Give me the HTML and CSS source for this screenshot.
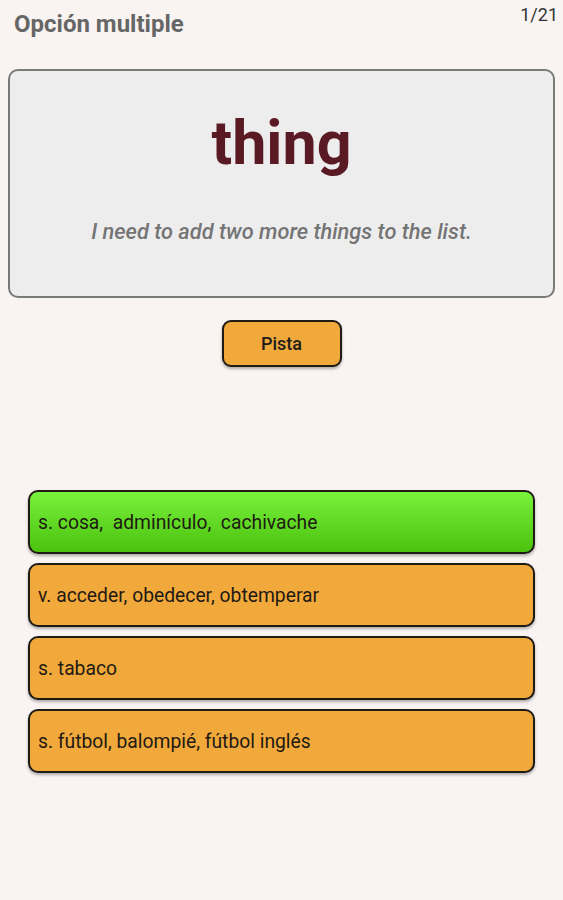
FILE: index.html
```html
<!DOCTYPE html>
<html lang="es">
<head>
  <meta charset="UTF-8">
  <title>Opción multiple</title>
  <link rel="stylesheet" href="styles.css">
</head>
<body>

<div class="screen">
  <div class="topbar">
    <div class="title">Opción multiple</div>
    <div class="counter">1/21</div>
  </div>

  <div class="card">
    <div class="word">thing</div>
    <div class="example">I need to add two more things to the list.</div>
  </div>

  <div class="hint">
    <button class="hint-btn">Pista</button>
  </div>

  <div class="options">
    <div class="option correct">s. cosa,&nbsp; adminículo,&nbsp; cachivache</div>
    <div class="option">v. acceder, obedecer, obtemperar</div>
    <div class="option">s. tabaco</div>
    <div class="option">s. fútbol, balompié, fútbol inglés</div>
  </div>
</div>

</body>
</html>
```

FILE: styles.css
```css
body {
  margin: 0;
  font-family: Roboto, 'Noto Sans', sans-serif;
  background: #f9f4f2;
}

.screen {
  width: 563px;
  height: 900px;
}

.topbar {
  display: flex;
  justify-content: space-between;
  align-items: flex-start;
  padding: 4px 5px 0 14px;
  height: 69px;
  box-sizing: border-box;
}

.title {
  font-size: 24px;
  font-weight: bold;
  color: #666;
  margin-top: 6px;
}

.counter {
  font-size: 18px;
  color: #333;
}

.card {
  margin: 0 8px;
  height: 229px;
  box-sizing: border-box;
  background: #eeedee;
  border: 2px solid #7a7a7a;
  border-radius: 10px;
  text-align: center;
  padding-top: 32px;
}

.word {
  font-size: 61px;
  font-weight: bold;
  color: #5a1a24;
  line-height: 80px;
}

.example {
  font-size: 21.8px;
  font-weight: 500;
  font-style: italic;
  color: #747474;
  margin-top: 36px;
}

.hint {
  display: flex;
  justify-content: center;
  margin-top: 22px;
}

.hint-btn {
  width: 120px;
  height: 47px;
  background: #f2a93b;
  border: 2px solid #1e1a14;
  border-radius: 9px;
  font-family: Roboto, sans-serif;
  font-size: 18px;
  font-weight: 500;
  color: #1c1c1c;
  box-shadow: 0 2px 3px rgba(0,0,0,0.3);
}

.options {
  display: flex;
  flex-direction: column;
  gap: 9px;
  margin: 123px 28px 0 28px;
}

.option {
  height: 64px;
  box-sizing: border-box;
  display: flex;
  align-items: center;
  padding-left: 8px;
  background: #f2a93b;
  border: 2px solid #1e1a14;
  border-radius: 10px;
  font-size: 19.3px;
  color: #1f1a14;
  box-shadow: 0 2px 3px rgba(0,0,0,0.3);
}

.option.correct {
  background: linear-gradient(#79f23c, #4bc20e);
}
```
